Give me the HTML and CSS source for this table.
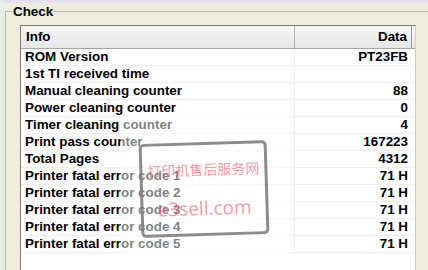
FILE: index.html
```html
<!DOCTYPE html>
<html>
<head>
<meta charset="utf-8">
<link rel="stylesheet" href="styles.css">
</head>
<body>
<div class="window">
  <fieldset class="group">
    <legend>Check</legend>
    <div class="list">
      <div class="row head"><div class="c1">Info</div><div class="c2">Data</div><div class="c3"></div></div>
      <div class="row"><div class="c1">ROM Version</div><div class="c2">PT23FB</div><div class="c3"></div></div>
      <div class="row"><div class="c1">1st TI received time</div><div class="c2"></div><div class="c3"></div></div>
      <div class="row"><div class="c1">Manual cleaning counter</div><div class="c2">88</div><div class="c3"></div></div>
      <div class="row"><div class="c1">Power cleaning counter</div><div class="c2">0</div><div class="c3"></div></div>
      <div class="row"><div class="c1">Timer cleaning counter</div><div class="c2">4</div><div class="c3"></div></div>
      <div class="row"><div class="c1">Print pass counter</div><div class="c2">167223</div><div class="c3"></div></div>
      <div class="row"><div class="c1">Total Pages</div><div class="c2">4312</div><div class="c3"></div></div>
      <div class="row"><div class="c1">Printer fatal error code 1</div><div class="c2">71 H</div><div class="c3"></div></div>
      <div class="row"><div class="c1">Printer fatal error code 2</div><div class="c2">71 H</div><div class="c3"></div></div>
      <div class="row"><div class="c1">Printer fatal error code 3</div><div class="c2">71 H</div><div class="c3"></div></div>
      <div class="row"><div class="c1">Printer fatal error code 4</div><div class="c2">71 H</div><div class="c3"></div></div>
      <div class="row"><div class="c1">Printer fatal error code 5</div><div class="c2">71 H</div><div class="c3"></div></div>
    </div>
  </fieldset>
</div>
<div class="wm-veil"></div>
<div class="wm-box">
  <div class="wm-cn">打印机售后服务网</div>
  <div class="wm-url">e3sell.com</div>
</div>
</body>
</html>
```

FILE: styles.css
```css
* { box-sizing: border-box; }
html, body { margin: 0; padding: 0; }
body {
  position: relative;
  width: 428px;
  height: 270px;
  overflow: hidden;
  background: #efecdd;
  font-family: "Liberation Sans", Arial, sans-serif;
  font-size: 13.4px;
  font-weight: bold;
  color: #000;
}
.window {
  height: 270px;
  border-top: 3px solid #e3e2ec;
  border-left: 4px solid #e2f1e3;
  padding: 1px 0 0 1px;
}
.group {
  margin: 0;
  width: 440px;
  height: 300px;
  min-width: 0;
  border: 1px solid #b9b8ab;
  padding: 6px 0 0 6px;
}
.group legend {
  margin: 0;
  padding: 0 1px;
  font-size: 13.4px;
  line-height: 15px;
}
.list {
  margin-left: 8px;
  width: 396px;
  height: 260px;
  background: #fff;
  border: 1px solid #7b7b7b;
  border-bottom: none;
  border-right-color: #cfcfc8;
}
.row {
  display: grid;
  grid-template-columns: 274px 117px 1fr;
  height: 17px;
  line-height: 16px;
  border-bottom: 1px solid #efefef;
  white-space: nowrap;
}
.row .c1 { padding-left: 4px; border-right: 1px solid #efefef; }
.row .c2 { text-align: right; padding-right: 4px; }
.row.head {
  height: 23px;
  line-height: 22px;
  background: linear-gradient(#f5f5f5, #e7e7e7);
  border-bottom: 1px solid #a6a6a6;
}
.row.head .c1 { padding-left: 5px; border-right: 1px solid #b3b3b3; }
.row.head .c2 { border-right: 1px solid #9c9c9c; }

.wm-veil {
  position: absolute;
  left: 121px;
  top: 116px;
  width: 170px;
  height: 137px;
  background: rgba(255, 255, 255, 0.5);
}
.wm-box {
  position: absolute;
  left: 140px;
  top: 142px;
  width: 128px;
  height: 94px;
  border: 3px solid rgba(120, 120, 120, 0.85);
  border-radius: 5px;
  transform: rotate(-1.8deg);
  display: flex;
  flex-direction: column;
  align-items: center;
}
.wm-cn {
  margin-top: 16px;
  font-family: "Noto Sans CJK SC", sans-serif;
  font-weight: normal;
  font-size: 14px;
  line-height: 16px;
  color: rgba(228, 85, 100, 0.6);
  white-space: nowrap;
}
.wm-url {
  margin-top: 20px;
  font-family: "Open Sans", sans-serif;
  font-weight: normal;
  font-size: 19px;
  line-height: 22px;
  color: rgba(228, 85, 100, 0.6);
}
```
